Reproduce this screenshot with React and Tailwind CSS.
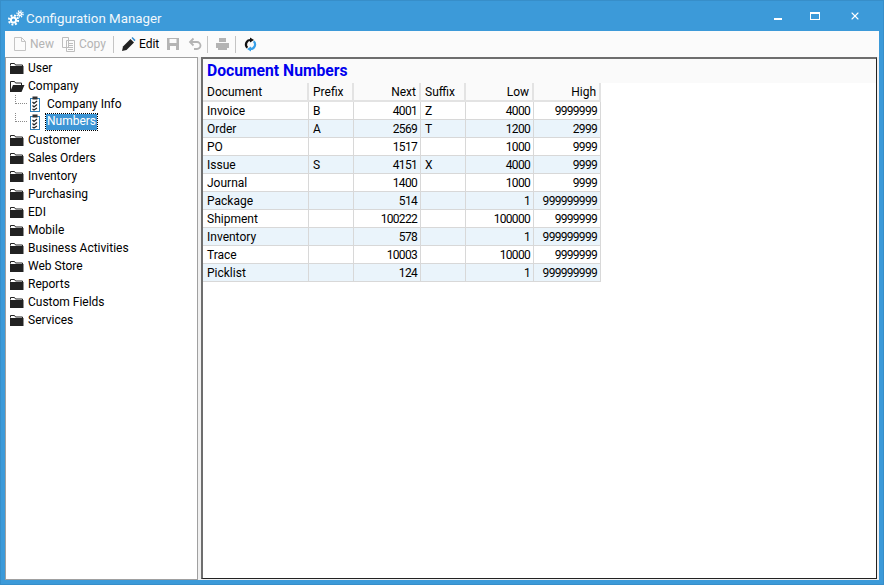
import { X } from 'lucide-react';

const font = "[font-family:Roboto,sans-serif]";

const treeItems = ['Customer', 'Sales Orders', 'Inventory', 'Purchasing', 'EDI', 'Mobile', 'Business Activities', 'Web Store', 'Reports', 'Custom Fields', 'Services'];

const rows = [
  ['Invoice', 'B', '4001', 'Z', '4000', '9999999'],
  ['Order', 'A', '2569', 'T', '1200', '2999'],
  ['PO', '', '1517', '', '1000', '9999'],
  ['Issue', 'S', '4151', 'X', '4000', '9999'],
  ['Journal', '', '1400', '', '1000', '9999'],
  ['Package', '', '514', '', '1', '999999999'],
  ['Shipment', '', '100222', '', '100000', '9999999'],
  ['Inventory', '', '578', '', '1', '999999999'],
  ['Trace', '', '10003', '', '10000', '9999999'],
  ['Picklist', '', '124', '', '1', '999999999'],
];

const widths = ['w-[106px]', 'w-[45px]', 'w-[67px]', 'w-[45px]', 'w-[68px]', 'w-[67px]'];
const headers = ['Document', 'Prefix', 'Next', 'Suffix', 'Low', 'High'];
const rightCols = [2, 4, 5];

function Gears() {
  return (
    <svg width="16" height="16" viewBox="0 0 16 16" fill="none" stroke="white">
      <circle cx="5.5" cy="10" r="2.6" strokeWidth="2" />
      <circle cx="5.5" cy="10" r="4.6" strokeWidth="2" strokeDasharray="1.9 1.71" />
      <circle cx="12" cy="4" r="1.5" strokeWidth="1.4" />
      <circle cx="12" cy="4" r="3" strokeWidth="1.5" strokeDasharray="1.3 1.06" />
    </svg>
  );
}

function FolderClosed() {
  return (
    <svg width="16" height="14" viewBox="0 0 16 14" className="shrink-0">
      <path d="M1.5 4.5v-2h4l1 1.5h7v1" fill="none" stroke="#222" />
      <path d="M1 5h13.5v8H1z" fill="#222" />
    </svg>
  );
}

function FolderOpen() {
  return (
    <svg width="16" height="14" viewBox="0 0 16 14" className="shrink-0">
      <path d="M1.5 13V2.5h4l1 1.5h6v2" fill="none" stroke="#222" />
      <path d="M1 13l3-7h11.500L12.500 13z" fill="#222" />
    </svg>
  );
}

function Checklist() {
  return (
    <svg width="12" height="16" viewBox="0 0 12 16" className="shrink-0">
      <rect x="1.5" y="2.5" width="9" height="13" fill="#fff" stroke="#2e7fb8" />
      <rect x="3.5" y="0.5" width="5" height="3" fill="#333" />
      <path d="M3.5 6l1.500 1.500 3-2.500M3.500 9.500l1.500 1.500 3-2.500M3.500 13l1.500 1 3-2" fill="none" stroke="#222" strokeWidth="1.2" />
    </svg>
  );
}

function ToolButton({ icon, label, disabled, className = '' }) {
  return (
    <div className={'flex items-center gap-[3px] ' + (disabled ? 'text-[#b4b4b4] ' : 'text-black ') + className}>
      {icon}
      {label && <span>{label}</span>}
    </div>
  );
}

function Sep({ className = '' }) {
  return <div className={'w-px h-[17px] bg-[#c4c4c4] ' + className} />;
}

function TreeRow({ icon, label }) {
  return (
    <div className="h-[18px] flex items-center gap-[3px] pl-[3px]">
      {icon}
      <span>{label}</span>
    </div>
  );
}

function ChildRow({ label, selected }) {
  return (
    <div className="h-[18px] flex items-center pl-[9px]">
      <div className="w-[12px] h-[9px] -mt-[9px] border-l border-b border-dotted border-[#8a8a8a]" />
      <div className="ml-[2px] mr-[3px]">
        <Checklist />
      </div>
      <span className={selected ? 'px-[1px] h-[16px] leading-[15px] ml-[2px] bg-[#3d95d5] text-white outline-1 outline-dotted outline-black' : 'px-[1px] ml-[2px]'}>
        {label}
      </span>
    </div>
  );
}

export default function App() {
  return (
    <div className={'w-[884px] h-[585px] bg-[#3c9ad9] border border-[#378ec9] flex flex-col overflow-hidden text-[12px] ' + font}>
      {/* title bar */}
      <div className="h-[30px] shrink-0 flex items-center text-white">
        <div className="ml-[7px] mr-[2px] mt-[3px]">
          <Gears />
        </div>
        <span className="text-[13.3px] mt-[5px] text-[#f2f8fc]">Configuration Manager</span>
        <div className="ml-auto flex items-center mr-[5px]">
          <div className="w-[46px] flex justify-center">
            <div className="w-[8px] h-[2px] bg-white mt-[6px] ml-[6px]" />
          </div>
          <div className="w-[34px] flex justify-center">
            <div className="w-[10px] h-[8px] border border-t-2 border-white" />
          </div>
          <div className="w-[46px] flex justify-center">
            <X size={12} strokeWidth={2.2} />
          </div>
        </div>
      </div>

      <div className="flex-1 mx-[4px] mb-[4px] bg-[#f0f0f0] flex flex-col min-h-0">
        {/* toolbar */}
        <div className="h-[26px] shrink-0 bg-[#fbfbfb] flex items-center pl-[8px] gap-[7px]">
          <ToolButton
            disabled
            label="New"
            icon={
              <svg width="14" height="16" viewBox="0 0 14 16" fill="none" stroke="#c4c4c4">
                <path d="M1.5 1.5h7l4 4v9h-11zM8.500 1.500v4h4" />
              </svg>
            }
          />
          <ToolButton
            disabled
            label="Copy"
            icon={
              <svg width="15" height="16" viewBox="0 0 15 16" fill="none" stroke="#bdbdbd">
                <path d="M1.5 1.5h6v10h-6zM5.500 4.500h8v11h-8zM7 7.500h5M7 9.500h5M7 11.500h5M7 13.500h5" />
              </svg>
            }
          />
          <Sep />
          <ToolButton
            label="Edit"
            icon={
              <svg width="15" height="16" viewBox="0 0 15 16">
                <path d="M1 15l1-4.500L9.500 3l3.500 3.500L5.500 14z" fill="#222" />
                <path d="M10.500 2l1-1 3 3-1 1.200z" fill="#2e8ad0" />
              </svg>
            }
          />
          <ToolButton
            icon={
              <svg width="14" height="14" viewBox="0 0 14 14" fill="#b4b4b4">
                <path fillRule="evenodd" d="M1 1h12v12H1zM3.500 2v4h7V2zM4 9v4h6V9z" />
              </svg>
            }
          />
          <ToolButton
            className="ml-[1px]"
            icon={
              <svg width="14" height="14" viewBox="0 0 14 14" fill="none" stroke="#b4b4b4" strokeWidth="1.8">
                <path d="M5.5 1.5L2 5l3.500 3.500M2 5h7a3.500 3.500 0 010 7H6" />
              </svg>
            }
          />
          <Sep className="-ml-[2px]" />
          <ToolButton
            icon={
              <svg width="15" height="14" viewBox="0 0 15 14" fill="#b4b4b4">
                <path d="M4 1h7v4H4zM1 6h13v5H1zM3 10h9v3H3z" />
              </svg>
            }
          />
          <Sep className="-ml-[2px]" />
          <ToolButton
            icon={
              <svg width="15" height="15" viewBox="0 0 15 15" fill="none" strokeWidth="2.2">
                <path d="M7.500 3A4.500 4.500 0 004.300 10.700" stroke="#111" />
                <path d="M7.500 12A4.500 4.500 0 0010.700 4.300" stroke="#38a0e8" />
                <path d="M7 0.500L11 3 7 5.500z" fill="#111" stroke="none" />
                <path d="M8 9.500L4 12l4 2.500z" fill="#38a0e8" stroke="none" />
              </svg>
            }
          />
        </div>

        <div className="flex-1 flex min-h-0">
          {/* tree */}
          <div className="w-[193px] shrink-0 bg-white border border-[#a0a0a0] pt-[1px] text-black">
            <TreeRow icon={<FolderClosed />} label="User" />
            <TreeRow icon={<FolderOpen />} label="Company" />
            <ChildRow label="Company Info" />
            <ChildRow label="Numbers" selected />
            {treeItems.map((t) => (
              <TreeRow key={t} icon={<FolderClosed />} label={t} />
            ))}
          </div>

          {/* main panel */}
          <div className="flex-1 ml-[3px] mr-[2px] mb-[1px] bg-white border-l-2 border-t-2 border-l-[#6e6e6e] border-t-[#6e6e6e] border-r border-b border-r-[#222] border-b-[#222] text-black">
            <div className="h-[24px] bg-[#fafafa] flex items-center pl-[4px] text-[15.7px] font-bold text-[#0000ee]">
              Document Numbers
            </div>
            <div className="flex h-[19px] w-fit">
              {headers.map((h, i) => (
                <div
                  key={h}
                  className={
                    widths[i] +
                    ' flex items-center pl-[4px] pr-[3px] bg-[#fafafa] border-r-2 border-b-2 border-[#e3e3e3] ' +
                    (rightCols.includes(i) ? 'justify-end' : '')
                  }
                >
                  {h}
                </div>
              ))}
            </div>
            {rows.map((r, ri) => (
              <div key={r[0]} className={'flex w-fit h-[18px] ' + (ri % 2 ? 'bg-[#eaf4fb]' : 'bg-white')}>
                {r.map((c, i) => (
                  <div
                    key={i}
                    className={
                      widths[i] +
                      ' flex items-center pl-[4px] pr-[3px] border-r border-b border-[#d8d8d8] ' +
                      (rightCols.includes(i) ? 'justify-end tracking-[-0.7px]' : '')
                    }
                  >
                    {c}
                  </div>
                ))}
              </div>
            ))}
          </div>
        </div>
      </div>
    </div>
  );
}
